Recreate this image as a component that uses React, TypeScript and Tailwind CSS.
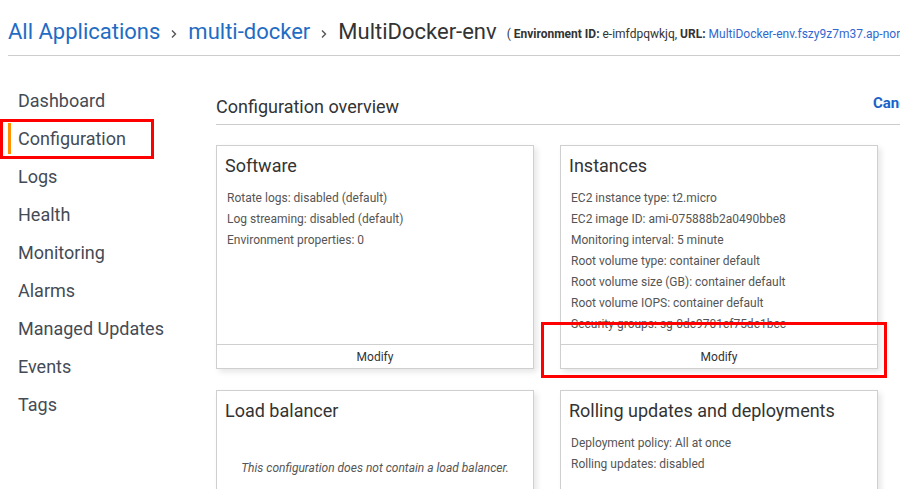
import type { ReactNode } from 'react';

const navItems = [
  'Dashboard',
  'Configuration',
  'Logs',
  'Health',
  'Monitoring',
  'Alarms',
  'Managed Updates',
  'Events',
  'Tags',
];

function Chevron() {
  return (
    <svg width="8" height="10" viewBox="0 0 8 10" className="mx-[10px] mt-[3px] shrink-0">
      <path d="M2 1.5 L5.5 5 L2 8.5" fill="none" stroke="#555" strokeWidth="1.4" />
    </svg>
  );
}

interface CardProps {
  title: string;
  children: ReactNode;
  footer?: boolean;
}

function Card({ title, children, footer }: CardProps) {
  return (
    <div className="h-[224px] w-[318px] bg-white border border-[#cfcfcf] shadow-[3px_3px_6px_rgba(0,0,0,0.10)] flex flex-col overflow-hidden">
      <div className="flex-1 overflow-hidden">
        <h3 className="pt-[8px] pl-[8px] text-[18px] leading-[24px] text-[#333]">{title}</h3>
        <div className="mt-[10px] pl-[10px]">{children}</div>
      </div>
      {footer && (
        <div className="h-[24px] shrink-0 border-t border-[#cfcfcf] flex items-center justify-center text-[12px] text-[#333]">
          Modify
        </div>
      )}
    </div>
  );
}

function Line({ children }: { children: ReactNode }) {
  return <div className="text-[12px] leading-[21px] text-[#555] whitespace-nowrap">{children}</div>;
}

export default function App() {
  return (
    <div
      className="relative w-[900px] h-[489px] overflow-hidden bg-white"
      style={{ fontFamily: 'Roboto, "Liberation Sans", sans-serif' }}
    >
      {/* Breadcrumb */}
      <div className="ml-[8px] w-[1000px] pt-[19px] pb-[10px] border-b border-[#cccccc] flex items-center whitespace-nowrap">
        <span className="text-[22px] leading-[26px] text-[#1f6cc4]">All Applications</span>
        <Chevron />
        <span className="text-[22px] leading-[26px] text-[#1f6cc4]">multi-docker</span>
        <Chevron />
        <span className="text-[22px] leading-[26px] text-[#333]">MultiDocker-env</span>
        <span className="ml-[10px] mt-[4px] text-[12px] text-[#333]">
          ( <b>Environment ID:</b> e-imfdpqwkjq, <b>URL:</b>{' '}
          <span className="text-[#3168d0]">MultiDocker-env.fszy9z7m37.ap-northeast-2.elasticbeanstalk.com</span> )
        </span>
      </div>

      <div className="flex">
        {/* Sidebar */}
        <nav className="w-[216px] shrink-0 pt-[25px]">
          {navItems.map((item) => (
            <div key={item} className="relative h-[38px] flex items-center pl-[18px]">
              {item === 'Configuration' && (
                <>
                  <span className="absolute left-[8px] top-[4px] w-[3px] h-[31px] bg-[#ff9100]" />
                  <span className="absolute left-0 top-0 w-[154px] h-[40px] border-[3px] border-[#ff0000]" />
                </>
              )}
              <span className="text-[18px] text-[#444b55]">{item}</span>
            </div>
          ))}
        </nav>

        {/* Main */}
        <main className="w-[720px] shrink-0">
          <div className="pt-[39px] pb-[5px] border-b border-[#cccccc] flex items-center">
            <h2 className="w-[657px] text-[18px] leading-[24px] text-[#333]">Configuration overview</h2>
            <span className="-mt-[7px] text-[15px] font-bold text-[#1a62c8]">Cancel</span>
          </div>

          <div className="mt-[20px] grid grid-cols-[318px_318px] gap-x-[26px] gap-y-[21px]">
            <Card title="Software" footer>
              <Line>Rotate logs: disabled (default)</Line>
              <Line>Log streaming: disabled (default)</Line>
              <Line>Environment properties: 0</Line>
            </Card>
            <Card title="Instances" footer>
              <Line>EC2 instance type: t2.micro</Line>
              <Line>EC2 image ID: ami-075888b2a0490bbe8</Line>
              <Line>Monitoring interval: 5 minute</Line>
              <Line>Root volume type: container default</Line>
              <Line>Root volume size (GB): container default</Line>
              <Line>Root volume IOPS: container default</Line>
              <Line>Security groups: sg-0dc9701cf75dc1bcc</Line>
            </Card>
            <Card title="Load balancer">
              <div className="pt-[26px] pr-[10px] text-center text-[12px] italic text-[#555]">
                This configuration does not contain a load balancer.
              </div>
            </Card>
            <Card title="Rolling updates and deployments">
              <Line>Deployment policy: All at once</Line>
              <Line>Rolling updates: disabled</Line>
            </Card>
          </div>
        </main>
      </div>

      {/* Highlight annotation */}
      <div className="absolute left-[541px] top-[322px] w-[346px] h-[56px] border-[3px] border-[#ff0000]" />
    </div>
  );
}
